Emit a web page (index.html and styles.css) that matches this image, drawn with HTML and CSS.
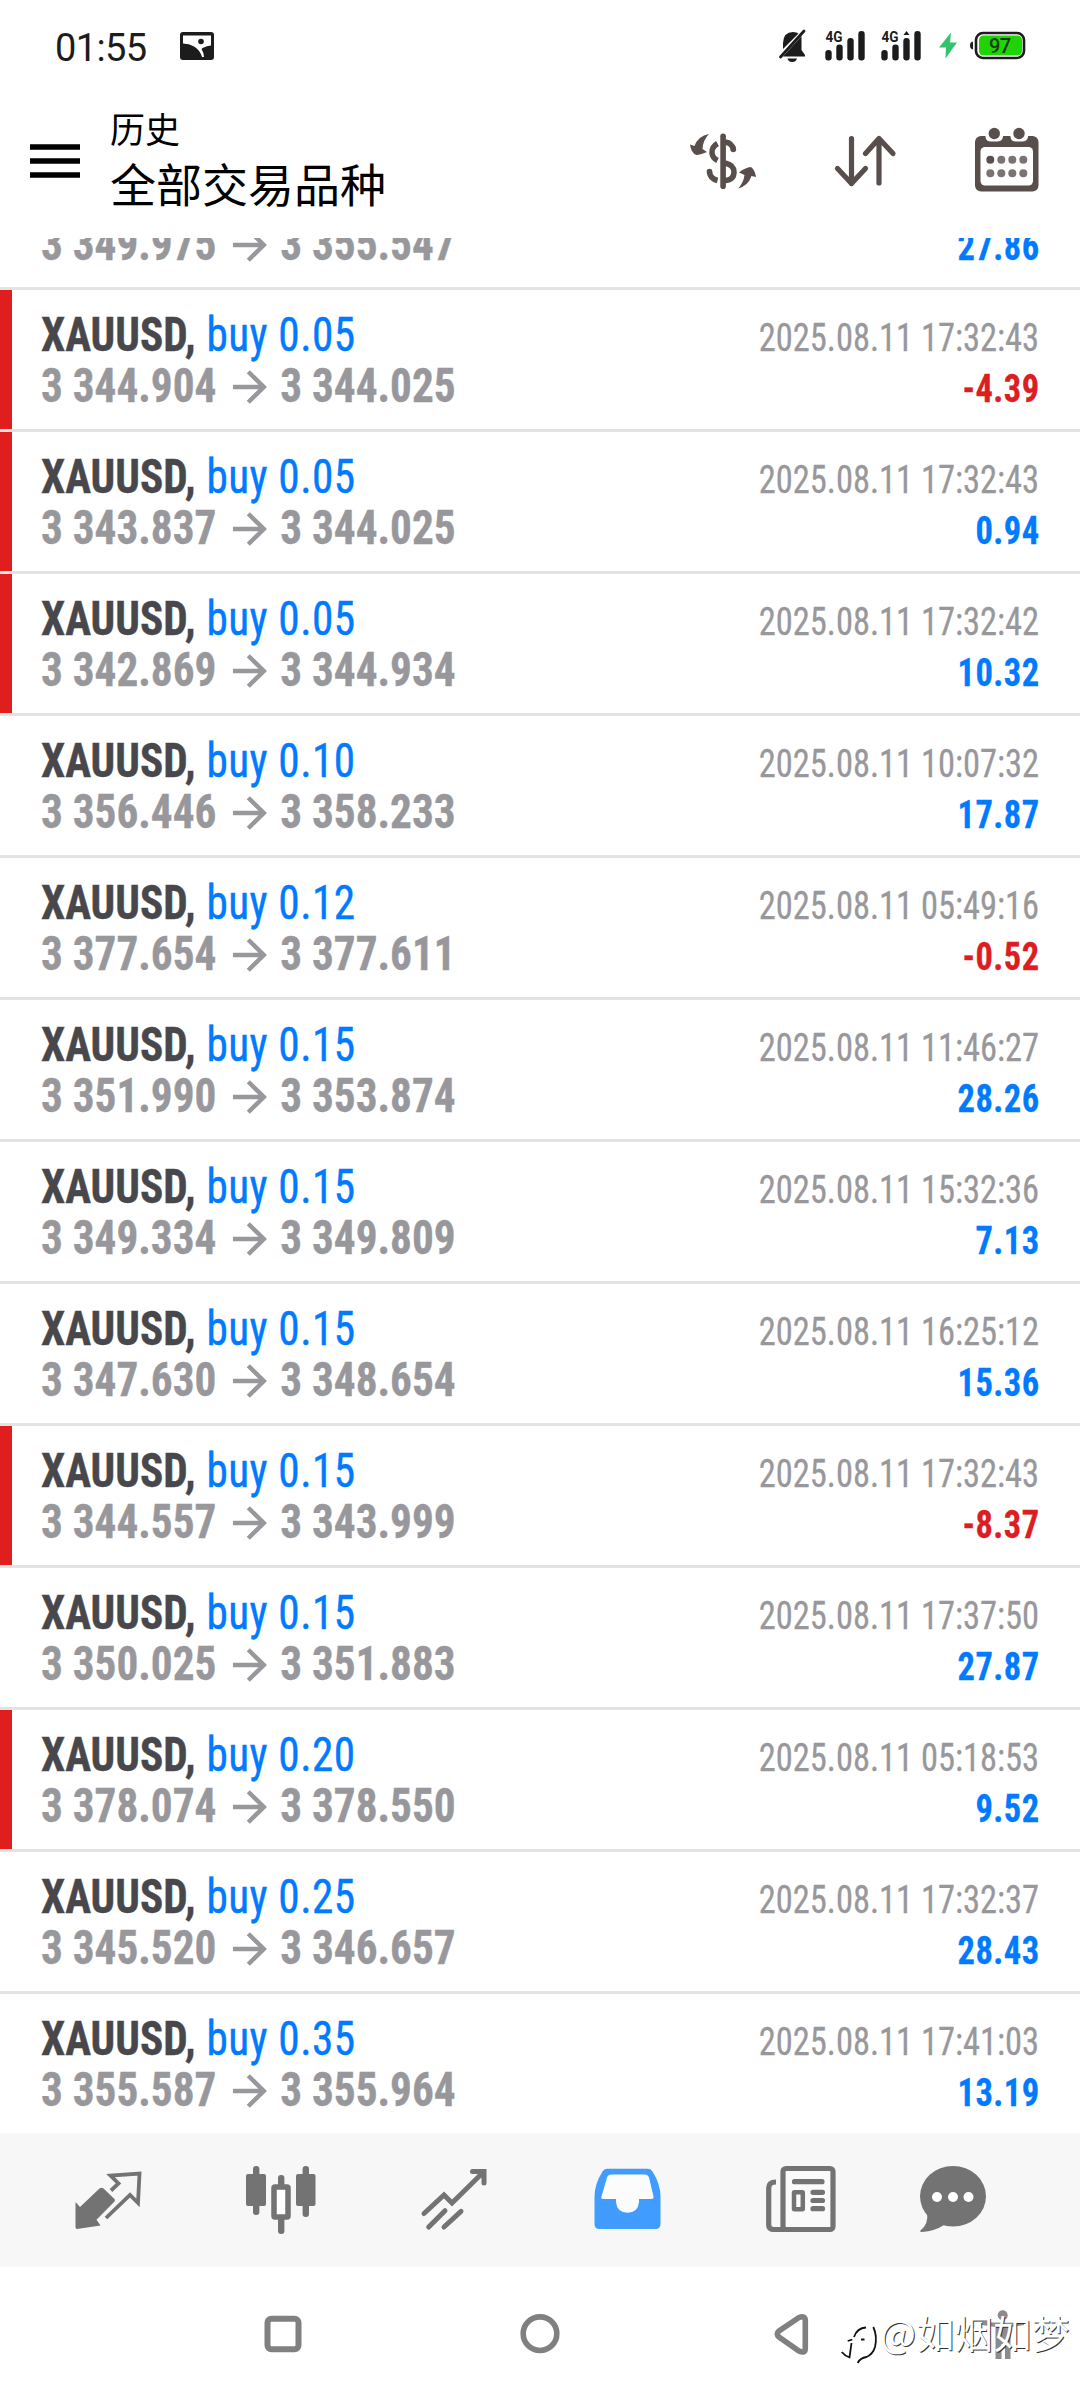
FILE: index.html
```html
<!DOCTYPE html>
<html lang="zh-CN">
<head>
<meta charset="utf-8">
<title>历史</title>
<link rel="stylesheet" href="styles.css">
</head>
<body>
<div class="screen">
  <div class="status">
    <span class="clock">01:55</span>
    <svg class="pic" viewBox="0 0 34 28" width="34" height="28"><rect width="34" height="28" rx="3" fill="#1c1c1c"/><path d="M3 3.500H31V13.500Q24 14.500 21.500 17Q24 21 24 25H22Q20 18 14 14.500Q9 11.500 3 11.500Z" fill="#fff"/><circle cx="21" cy="9.500" r="2.800" fill="#1c1c1c"/></svg>
    <div class="status-icons">
      <svg viewBox="775 25 40 40" width="40" height="40" fill="#1c1c1c"><path d="M783 49V43Q783.500 32 793 32Q797 32 798.500 33.500ZM801.500 36V50L805 55V56.500H783L801.500 36Z"/><path d="M780.500 57L804 31" stroke="#1c1c1c" stroke-width="2.800" stroke-linecap="round"/><path d="M787.500 58.500H797Q796 62 792.200 62Q788.500 62 787.500 58.500Z"/></svg>
      <svg viewBox="815 25 56 40" width="56" height="40" fill="#1c1c1c"><text class="net" x="825.500" y="42" textLength="17" lengthAdjust="spacingAndGlyphs">4G</text><rect x="825.300" y="50" width="6.400" height="10.500" rx="3"/><rect x="836.300" y="44.500" width="6.400" height="16" rx="3"/><rect x="847.300" y="38" width="6.400" height="22.500" rx="3"/><rect x="858.300" y="31" width="6.400" height="29.500" rx="3"/></svg>
      <svg viewBox="815 25 56 40" width="56" height="40" fill="#1c1c1c"><text class="net" x="825.500" y="42" textLength="17" lengthAdjust="spacingAndGlyphs">4G</text><rect x="825.300" y="50" width="6.400" height="10.500" rx="3"/><rect x="836.300" y="44.500" width="6.400" height="16" rx="3"/><rect x="847.300" y="38" width="6.400" height="22.500" rx="3"/><rect x="858.300" y="31" width="6.400" height="29.500" rx="3"/><path d="M850.500 31L853.500 35H847.500Z"/></svg>
      <svg viewBox="927 25 38 40" width="38" height="40"><path d="M951 32.500L939 47.500H946L945.500 58.500L957 42.500H950Z" fill="#32c36c"/></svg>
      <svg viewBox="965 25 65 40" width="65" height="40"><path d="M973 41.500Q970 42 970 45.500Q970 49 973 49.500Z" fill="#1c1c1c"/><rect x="976" y="33" width="48" height="25" rx="7" fill="#fff" stroke="#1c1c1c" stroke-width="2.600"/><rect x="979" y="35.500" width="43" height="20" rx="4.500" fill="#1fd305"/><text class="batt" x="989" y="52.800" textLength="22">97</text></svg>
    </div>
  </div>

  <header class="header">
    <svg class="menu" viewBox="0 0 50 34" width="50" height="34"><path d="M0 3H50M0 17H50M0 31H50" stroke="#000" stroke-width="5.500"/></svg>
    <div class="titles">
      <div class="sub">历史</div>
      <div class="title">全部交易品种</div>
    </div>
    <div class="actions">
      <svg viewBox="680 120 84 80" width="84" height="80" fill="#584e4b"><rect x="719.300" y="133.500" width="5.600" height="55.500" rx="2.800"/><path d="M724 142Q731.500 143 732.500 150M716.500 143.500Q710.500 147 711 153Q711.500 158 716.500 160.500M724 163Q733 165 733 172Q733 180 724 180.500M708.500 172Q709 178.500 716.500 180.500" fill="none" stroke="#584e4b" stroke-width="5.500"/><circle cx="732.300" cy="149.500" r="2.800"/><circle cx="708.500" cy="171.500" r="2.800"/><path d="M708 134Q702 140 701.500 149L706 152Q699 155 695.500 155Q690 153 689 144.500L693.500 146Q697 136 708 134Z"/><path d="M737 188.500Q742.500 183 743.500 175L738 172.500Q744 167.500 750 167Q754 170 755 177L750.500 176Q747 186 737 188.500Z"/></svg>
      <svg viewBox="825 120 80 80" width="80" height="80" fill="none" stroke="#584e4b" stroke-width="5.200" stroke-linecap="round" stroke-linejoin="round"><path d="M851.500 138.500V183.500M837.500 168.500L851.500 183.500L865.500 168.500M879 183V138.500M865.500 153.500L879 138.500L893 153.500"/></svg>
      <svg viewBox="965 120 85 80" width="85" height="80" fill="#584e4b"><rect x="975" y="136" width="63.500" height="55.500" rx="6"/><rect x="980.500" y="147" width="52.500" height="38.500" rx="4.500" fill="#fff"/><path d="M985.500 135H1003V137Q1002 141.500 997 141.500H991Q986 141.500 985.500 137ZM1010.500 135H1028V137Q1027 141.500 1022 141.500H1016Q1011 141.500 1010.500 137Z" fill="#fff"/><circle cx="994.300" cy="133.500" r="5.700"/><circle cx="1019" cy="133.500" r="5.700"/><circle cx="990.300" cy="159.700" r="4"/><g fill="#7b7371"><circle cx="1001.300" cy="159.700" r="4"/><circle cx="1012.300" cy="159.700" r="4"/><circle cx="1023.300" cy="159.700" r="4"/><circle cx="990.300" cy="173.300" r="4"/><circle cx="1001.300" cy="173.300" r="4"/><circle cx="1012.300" cy="173.300" r="4"/><circle cx="1023.300" cy="173.300" r="4"/></g></svg>
    </div>
  </header>

  <svg class="defs" width="0" height="0"><symbol id="arrow" viewBox="0 0 34 34" preserveAspectRatio="none"><path d="M0 17H31M15.500 1.800L31 17L15.500 32.200" fill="none" stroke="currentColor" stroke-width="4.400"/></symbol></svg>

  <main class="list">
    <div class="row"><div class="deal"><div class="line"><span class="sym">XAUUSD,</span><span class="side">buy 0.15</span></div><div class="line"><span class="price">3 349.975</span><svg class="arr"><use href="#arrow"/></svg><span class="price">3 355.547</span></div></div><div class="result"><div class="time">2025.08.11 17:32:43</div><div class="pl">27.86</div></div></div>
    <div class="row mark"><div class="deal"><div class="line"><span class="sym">XAUUSD,</span><span class="side">buy 0.05</span></div><div class="line"><span class="price">3 344.904</span><svg class="arr"><use href="#arrow"/></svg><span class="price">3 344.025</span></div></div><div class="result"><div class="time">2025.08.11 17:32:43</div><div class="pl neg">-4.39</div></div></div>
    <div class="row mark"><div class="deal"><div class="line"><span class="sym">XAUUSD,</span><span class="side">buy 0.05</span></div><div class="line"><span class="price">3 343.837</span><svg class="arr"><use href="#arrow"/></svg><span class="price">3 344.025</span></div></div><div class="result"><div class="time">2025.08.11 17:32:43</div><div class="pl">0.94</div></div></div>
    <div class="row mark"><div class="deal"><div class="line"><span class="sym">XAUUSD,</span><span class="side">buy 0.05</span></div><div class="line"><span class="price">3 342.869</span><svg class="arr"><use href="#arrow"/></svg><span class="price">3 344.934</span></div></div><div class="result"><div class="time">2025.08.11 17:32:42</div><div class="pl">10.32</div></div></div>
    <div class="row"><div class="deal"><div class="line"><span class="sym">XAUUSD,</span><span class="side">buy 0.10</span></div><div class="line"><span class="price">3 356.446</span><svg class="arr"><use href="#arrow"/></svg><span class="price">3 358.233</span></div></div><div class="result"><div class="time">2025.08.11 10:07:32</div><div class="pl">17.87</div></div></div>
    <div class="row"><div class="deal"><div class="line"><span class="sym">XAUUSD,</span><span class="side">buy 0.12</span></div><div class="line"><span class="price">3 377.654</span><svg class="arr"><use href="#arrow"/></svg><span class="price">3 377.611</span></div></div><div class="result"><div class="time">2025.08.11 05:49:16</div><div class="pl neg">-0.52</div></div></div>
    <div class="row"><div class="deal"><div class="line"><span class="sym">XAUUSD,</span><span class="side">buy 0.15</span></div><div class="line"><span class="price">3 351.990</span><svg class="arr"><use href="#arrow"/></svg><span class="price">3 353.874</span></div></div><div class="result"><div class="time">2025.08.11 11:46:27</div><div class="pl">28.26</div></div></div>
    <div class="row"><div class="deal"><div class="line"><span class="sym">XAUUSD,</span><span class="side">buy 0.15</span></div><div class="line"><span class="price">3 349.334</span><svg class="arr"><use href="#arrow"/></svg><span class="price">3 349.809</span></div></div><div class="result"><div class="time">2025.08.11 15:32:36</div><div class="pl">7.13</div></div></div>
    <div class="row"><div class="deal"><div class="line"><span class="sym">XAUUSD,</span><span class="side">buy 0.15</span></div><div class="line"><span class="price">3 347.630</span><svg class="arr"><use href="#arrow"/></svg><span class="price">3 348.654</span></div></div><div class="result"><div class="time">2025.08.11 16:25:12</div><div class="pl">15.36</div></div></div>
    <div class="row mark"><div class="deal"><div class="line"><span class="sym">XAUUSD,</span><span class="side">buy 0.15</span></div><div class="line"><span class="price">3 344.557</span><svg class="arr"><use href="#arrow"/></svg><span class="price">3 343.999</span></div></div><div class="result"><div class="time">2025.08.11 17:32:43</div><div class="pl neg">-8.37</div></div></div>
    <div class="row"><div class="deal"><div class="line"><span class="sym">XAUUSD,</span><span class="side">buy 0.15</span></div><div class="line"><span class="price">3 350.025</span><svg class="arr"><use href="#arrow"/></svg><span class="price">3 351.883</span></div></div><div class="result"><div class="time">2025.08.11 17:37:50</div><div class="pl">27.87</div></div></div>
    <div class="row mark"><div class="deal"><div class="line"><span class="sym">XAUUSD,</span><span class="side">buy 0.20</span></div><div class="line"><span class="price">3 378.074</span><svg class="arr"><use href="#arrow"/></svg><span class="price">3 378.550</span></div></div><div class="result"><div class="time">2025.08.11 05:18:53</div><div class="pl">9.52</div></div></div>
    <div class="row"><div class="deal"><div class="line"><span class="sym">XAUUSD,</span><span class="side">buy 0.25</span></div><div class="line"><span class="price">3 345.520</span><svg class="arr"><use href="#arrow"/></svg><span class="price">3 346.657</span></div></div><div class="result"><div class="time">2025.08.11 17:32:37</div><div class="pl">28.43</div></div></div>
    <div class="row"><div class="deal"><div class="line"><span class="sym">XAUUSD,</span><span class="side">buy 0.35</span></div><div class="line"><span class="price">3 355.587</span><svg class="arr"><use href="#arrow"/></svg><span class="price">3 355.964</span></div></div><div class="result"><div class="time">2025.08.11 17:41:03</div><div class="pl">13.19</div></div></div>
  </main>

  <nav class="tabs">
    <svg viewBox="68 2160 80 80"><path d="M75.500 2202L80 2207L99.500 2188.500Q101.500 2187 103.500 2188.500L114.500 2199Q115.500 2200.300 114.500 2201.500L96.500 2219.700L100.500 2225.500L77 2229Q75.500 2229 75.500 2227Z" fill="#737373"/><path d="M111 2190.500L118.500 2183.500L110.500 2175.500L139.500 2173.500L138 2203L130 2195L106 2218" fill="none" stroke="#737373" stroke-width="3.800"/></svg>
    <svg viewBox="241 2160 80 80"><g fill="#737373"><rect x="253" y="2166" width="6.400" height="49" rx="3"/><rect x="246" y="2174" width="20" height="32" rx="2"/><rect x="302.600" y="2166" width="6.400" height="51" rx="3"/><rect x="296" y="2174" width="19.500" height="32" rx="2"/><rect x="278" y="2175" width="6.400" height="59" rx="3"/></g><rect x="274" y="2187" width="14" height="30" rx="1" fill="#fff" stroke="#737373" stroke-width="5.500"/></svg>
    <svg viewBox="414 2160 80 80"><path d="M424 2213.500L444 2195L452 2203L483.500 2172M472.500 2171.500H484V2183M428.700 2227L445 2210.700M444 2227L461 2211.300" fill="none" stroke="#737373" stroke-width="5" stroke-linecap="round"/></svg>
    <svg viewBox="587 2160 80 80"><path d="M607 2168.700H648Q651 2169 652.500 2171.500Q660.500 2184 660.500 2197V2224Q660.500 2229 655.500 2229H599.500Q594.500 2229 594.500 2224V2197Q594.500 2184 602.500 2171.500Q604 2169 607 2168.700Z" fill="#409cff"/><path d="M611.500 2174.500H644.500Q648 2174.500 649 2177.500L653.500 2196.500Q654 2199 651 2199H639V2202Q638 2212.700 627.500 2212.700Q617 2212.700 616 2202V2199H603.500Q600.500 2199 601.500 2196.500L607 2177.500Q608 2174.500 611.500 2174.500Z" fill="#fcfcfc"/></svg>
    <svg viewBox="760 2160 80 80" fill="none" stroke="#737373" stroke-width="5.200"><rect x="783" y="2168.500" width="50" height="61" rx="3" fill="#fafafa"/><path d="M776 2182Q768.700 2182 768.700 2188V2225Q768.700 2229.500 774 2229.500H785"/><path d="M794.500 2181.700H822M813 2192.300H822.500M813 2200.500H822.500M813 2208.700H822.500" stroke-linecap="round"/><rect x="794" y="2192.300" width="8.800" height="17" rx=".5" stroke-width="4.500"/></svg>
    <svg viewBox="913 2160 80 80"><ellipse cx="953" cy="2196.300" rx="33" ry="30.300" fill="#737373"/><path d="M927 2213Q929 2224 920 2231Q920 2232 922 2232Q935 2231 944 2225Z" fill="#737373"/><circle cx="937" cy="2197" r="5" fill="#fff"/><circle cx="953" cy="2197" r="5" fill="#fff"/><circle cx="968.500" cy="2197" r="5" fill="#fff"/></svg>
  </nav>

  <div class="sysnav">
    <svg viewBox="260 2310 46 50" width="46" height="50"><rect x="267.500" y="2318.700" width="31" height="30.500" rx="4" fill="none" stroke="#808080" stroke-width="6"/></svg>
    <svg viewBox="515 2310 50 50" width="50" height="50"><circle cx="540" cy="2333.700" r="16.800" fill="none" stroke="#808080" stroke-width="5.600"/></svg>
    <svg viewBox="768 2308 46 54" width="46" height="54"><path d="M799 2317.500L779 2331Q775.500 2334 779 2337L799 2351Q805 2354 805.300 2348.500V2320.500Q805 2315 799 2317.500Z" fill="none" stroke="#808080" stroke-width="5.600"/></svg>
    <svg viewBox="980 2305 48 58" width="48" height="58" fill="#8c8c8c"><circle cx="1002.700" cy="2314.300" r="5"/><path d="M982 2320.700Q1003 2322.700 1024 2320.700V2324L1010.500 2326V2358H1005V2343H1001.500V2358H995.500V2326L982 2324Z"/></svg>
  </div>

  <div class="watermark">
    <svg viewBox="838 2320 42 48" width="42" height="48" fill="none"><path d="M854 2337Q857 2328 866 2327.500M847.700 2341L852.300 2339.500M861 2339.500H864.500M873.300 2327Q877.500 2336 875 2347Q873 2354 866.500 2357Q860 2358 857.700 2363M841.700 2352Q845 2356 849.500 2357.300L851.500 2343" stroke="#111" stroke-width="1.800"/></svg>
    <span>@如烟如梦</span>
  </div>
</div>
</body>
</html>
```

FILE: styles.css
```css
* { box-sizing: border-box; }
body { margin: 0; background: #fff; }
.screen {
  position: relative;
  display: flex;
  flex-direction: column;
  width: 1080px;
  height: 2400px;
  overflow: hidden;
  background: #fff;
  font-family: "Roboto Condensed", Roboto, "Noto Sans CJK SC", sans-serif;
  font-stretch: 75%;
}
svg { display: block; flex: none; }
.defs { position: absolute; }

.status {
  display: flex;
  align-items: center;
  height: 94px;
  padding: 0 50px 4px 55px;
  color: #1c1c1c;
}
.clock {
  width: 125px;
  margin-top: 5px;
  font: 400 38px/44px Roboto, sans-serif;
  font-stretch: 100%;
  letter-spacing: -.6px;
}
.pic { margin-top: 1px; }
.status-icons { display: flex; margin-left: auto; }
.net { font: 700 15px Roboto, sans-serif; }
.batt { font: 500 20px Roboto, sans-serif; fill: #123a0c; }

.header {
  display: flex;
  flex: none;
  align-items: flex-start;
  height: 144px;
  padding: 0 30px;
  color: #000;
}
.menu { margin-top: 50px; }
.titles {
  margin-left: 30px;
  font-family: "Noto Sans CJK SC", sans-serif;
}
.sub { margin-top: 9px; font-size: 35px; line-height: 50px; }
.title { margin-top: -1px; font-size: 46px; line-height: 60px; }
.actions {
  display: flex;
  gap: 60px;
  margin: 26px 0 0 auto;
}

.list { flex: none; height: 1895px; overflow: hidden; }
.row {
  display: flex;
  justify-content: space-between;
  height: 142px;
  padding: 20px 41px 0;
  border-bottom: 3px solid #e3e3e3;
  line-height: 50px;
  white-space: pre;
}
.row:first-child { margin-top: -90px; }
.row.mark {
  background: linear-gradient(#e11e1e, #e11e1e) 0 0 / 12px 139px no-repeat;
}
/* The list type is narrower than the condensed face itself. */
.deal {
  font-size: 48px;
  transform: scaleX(.9);
  transform-origin: left;
  -webkit-text-stroke: .4px;
}
.result {
  padding-top: 3px;
  font-size: 38px;
  text-align: right;
  transform: scaleX(.907);
  transform-origin: right;
  -webkit-text-stroke: .3px;
}
.line {
  display: flex;
  align-items: baseline;
  height: 50px;
}
.line + .line { margin-top: 1px; }
.sym { color: #48484c; font-weight: 700; }
.side { margin-left: 12px; color: #007aff; letter-spacing: .5px; }
.price { color: #98989c; font-weight: 700; }
.arr { align-self: center; width: 38px; height: 34px; margin: 1px 15px 0 18px; color: #98989c; }
.time { color: #98989c; }
.pl { margin: 1px -.5px 0 0; color: #007aff; font-weight: 700; letter-spacing: .5px; }
.pl.neg { color: #dc1e23; }

.tabs {
  display: flex;
  flex: none;
  align-items: center;
  gap: 93px;
  height: 134px;
  padding-left: 68px;
  background: #f7f7f7;
}
.tabs svg { width: 80px; height: 80px; }
.tabs svg:last-child { margin-left: -20px; }

.sysnav {
  display: flex;
  flex: none;
  align-items: center;
  height: 133px;
  padding: 2px 52px 0 260px;
}
.sysnav svg:nth-child(2) { margin-left: 209px; }
.sysnav svg:nth-child(3) { margin-left: 203px; }
.sysnav svg:nth-child(4) { margin-left: auto; }

.watermark {
  position: absolute;
  left: 838px;
  top: 2307px;
  display: flex;
  align-items: flex-start;
  font: 400 38px/50px "Noto Sans CJK SC", sans-serif;
  letter-spacing: .4px;
  color: #fff;
  text-shadow: 1px 1px 0 #333;
  white-space: nowrap;
}
.watermark svg { margin-top: 13px; }
```
